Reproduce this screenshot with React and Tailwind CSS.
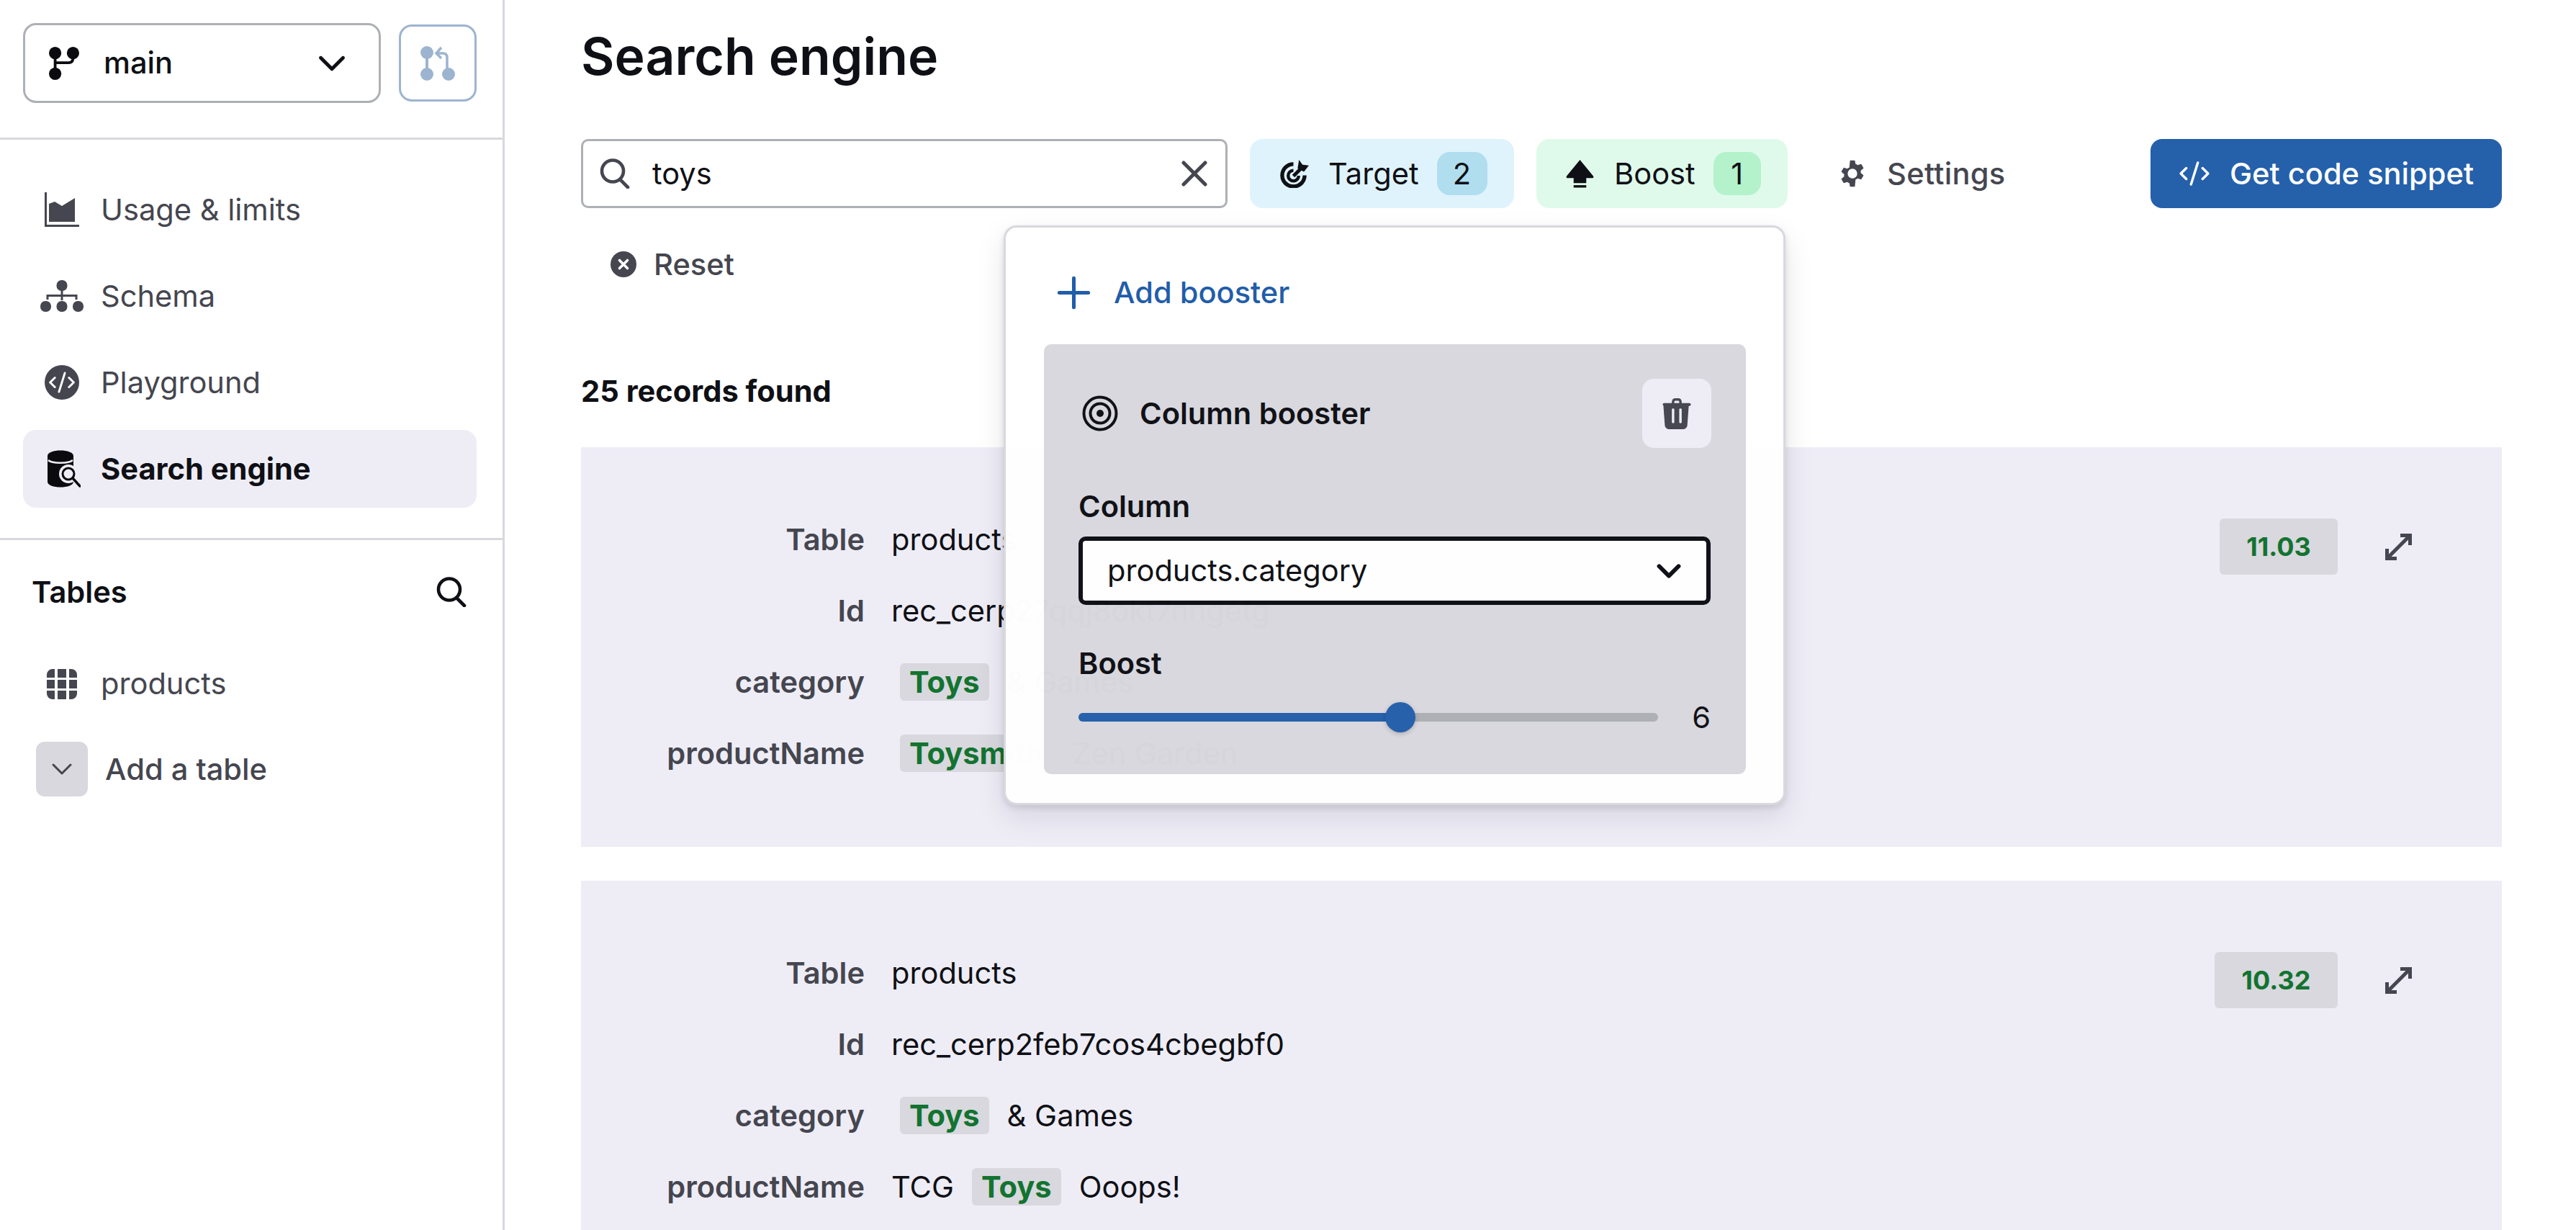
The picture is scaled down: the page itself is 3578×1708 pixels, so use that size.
import React from "react";
import { ChevronDown, X, Plus } from "lucide-react";

const font = { fontFamily: "Inter, sans-serif" };

const SearchGlyph = ({ className }) => (
  <svg viewBox="0 0 42 42" className={className} fill="none" stroke="currentColor" strokeWidth="4.6" strokeLinecap="round">
    <circle cx="18" cy="17.500" r="15" />
    <path d="M28 29l11 11" />
  </svg>
);

const BranchIcon = ({ className }) => (
  <svg viewBox="0 0 44 48" className={className} fill="currentColor">
    <circle cx="9" cy="9" r="9" />
    <circle cx="35" cy="9" r="9" />
    <circle cx="9" cy="39" r="9" />
    <path d="M7 9h4v12h18c3 0 4-2 4-5v-4h4v4c0 6-3 9-8 9H11v14H7z" />
  </svg>
);

const PullIcon = ({ className }) => (
  <svg viewBox="0 0 48 48" className={className} fill="currentColor">
    <circle cx="9" cy="9" r="9" />
    <circle cx="9" cy="39" r="9" />
    <circle cx="39" cy="39" r="9" />
    <path d="M7 9h4v30H7z" />
    <path d="M37 39V16c0-4-2-6-6-6h-7" fill="none" stroke="currentColor" strokeWidth="3.5" />
    <path d="M29 2l-7 8 7 7" fill="none" stroke="currentColor" strokeWidth="3.5" />
  </svg>
);

const UsageIcon = ({ className }) => (
  <svg viewBox="0 0 48 48" className={className} fill="currentColor">
    <path d="M0 0h3v45h45v3H0z" />
    <path d="M6 16l8-3 10 6 18-11v33H6z" />
  </svg>
);

const SchemaIcon = ({ className }) => (
  <svg viewBox="0 0 60 44" className={className} fill="currentColor">
    <rect x="22.5" y="0" width="15" height="15" rx="7" />
    <rect x="0" y="29" width="15" height="15" rx="7" />
    <rect x="22.5" y="29" width="15" height="15" rx="7" />
    <rect x="45" y="29" width="15" height="15" rx="7" />
    <path d="M28.5 14h3v6h20v7h-3v-4h-17v5h-3v-5h-17v4h-3v-7h20z" />
  </svg>
);

const CodeGlyph = ({ className }) => (
  <svg viewBox="0 0 44 36" className={className} fill="none" stroke="currentColor" strokeWidth="3.6" strokeLinecap="round" strokeLinejoin="round">
    <path d="M10 10l-8 8 8 8" />
    <path d="M34 10l8 8-8 8" />
    <path d="M27 2l-10 32" />
  </svg>
);

const PlaygroundIcon = ({ className }) => (
  <div className={`flex items-center justify-center rounded-full bg-[#45464f] text-white ${className}`}>
    <CodeGlyph className="w-[36px] h-[30px]" />
  </div>
);

const DbSearchIcon = ({ className }) => (
  <svg viewBox="0 0 46 52" className={className}>
    <path d="M0 8c0-10 36-10 36 0v36c0 10-36 10-36 0z" fill="#0b0b0f" />
    <path d="M1 14c5 5 29 5 34 0" fill="none" stroke="#eeedf6" strokeWidth="2.5" />
    <circle cx="29" cy="33" r="13" fill="#eeedf6" />
    <circle cx="29" cy="33" r="8" fill="none" stroke="#0b0b0f" strokeWidth="3" />
    <path d="M35 39l10 11" stroke="#0b0b0f" strokeWidth="3.5" strokeLinecap="round" />
  </svg>
);

const GridIcon = ({ className }) => (
  <svg viewBox="0 0 42 42" className={className} fill="currentColor">
    <path d="M0 8a8 8 0 0 1 8-8h3v12H0zM15 0h12v12H15zM31 0h3a8 8 0 0 1 8 8v4H31zM0 15h11v12H0zM15 15h12v12H15zM31 15h11v12H31zM0 30h11v12H8a8 8 0 0 1-8-8zM15 30h12v12H15zM31 30h11v4a8 8 0 0 1-8 8h-3z" />
  </svg>
);

const TargetArrowIcon = ({ className }) => (
  <svg viewBox="0 0 42 40" className={className} fill="none" stroke="currentColor">
    <path d="M20 6a16 16 0 1 0 16 16" strokeWidth="5.5" />
    <path d="M20 15a7.5 7.5 0 1 0 7.5 7.5" strokeWidth="4.5" />
    <path d="M20 23L31 12" strokeWidth="5" />
    <path d="M26 12l2-12 5 7 9 1-7 9z" fill="currentColor" stroke="none" />
  </svg>
);

const BoostIcon = ({ className }) => (
  <svg viewBox="0 0 40 40" className={className} fill="currentColor">
    <path d="M20 0l19 23c1 2 0 3-2 3h-8v7H11v-7H3c-2 0-3-1-2-3z" />
    <rect x="11" y="36" width="18" height="3.500" />
  </svg>
);

const GearIcon = ({ className }) => (
  <svg viewBox="0 0 24 24" className={className} fill="currentColor">
    <path fillRule="evenodd" d="M14 1l.6 3.1c.6.2 1.200.5 1.700.9l3-1 2 3.500-2.400 2.100c.1.600.1 1.200 0 1.800l2.400 2.100-2 3.500-3-1c-.5.400-1.100.7-1.700.9L14 23h-4l-.6-3.100c-.6-.2-1.200-.5-1.700-.9l-3 1-2-3.500 2.400-2.100c-.1-.6-.1-1.200 0-1.800L2.700 10.500l2-3.500 3 1c.5-.4 1.100-.7 1.700-.9L10 1zM12 8a4 4 0 1 0 0 8 4 4 0 0 0 0-8z" />
  </svg>
);

const ResetIcon = ({ className }) => (
  <svg viewBox="0 0 36 36" className={className}>
    <circle cx="18" cy="18" r="18" fill="#45464f" />
    <path d="M12.500 12.500l11 11M23.500 12.500l-11 11" stroke="#fff" strokeWidth="3.600" strokeLinecap="round" />
  </svg>
);

const RingsIcon = ({ className }) => (
  <svg viewBox="0 0 50 50" className={className} fill="none" stroke="currentColor">
    <circle cx="25" cy="25" r="22.500" strokeWidth="4" />
    <circle cx="25" cy="25" r="13.500" strokeWidth="4" />
    <circle cx="25" cy="25" r="5" fill="currentColor" stroke="none" />
  </svg>
);

const TrashIcon = ({ className }) => (
  <svg viewBox="0 0 40 44" className={className} fill="currentColor">
    <path fillRule="evenodd" d="M13 7V5c0-3 2-5 5-5h4c3 0 5 2 5 5v2h11c1 0 2 1 2 2s-1 2-2 2h-1l-2 27c0 3-3 6-6 6H9c-3 0-6-3-6-6L1 11H2C1 11 0 10 0 9s1-2 2-2zM16.500 7h7V5c0-1-1-1.500-2-1.500h-3c-1 0-2 .5-2 1.500zM13 16v18c0 2 3.500 2 3.500 0V16c0-2-3.500-2-3.500 0zM23.500 16v18c0 2 3.500 2 3.500 0V16c0-2-3.500-2-3.500 0z" />
  </svg>
);

const ExpandIcon = ({ className }) => (
  <svg viewBox="0 0 37 37" className={className} fill="none" stroke="currentColor" strokeWidth="5">
    <path d="M21 2.500h13.500V16" />
    <path d="M34 3L3 34" />
    <path d="M2.500 21v13.500H16" />
  </svg>
);

const navItems = [
  { label: "Usage & limits", icon: <UsageIcon className="w-[48px] h-[48px]" /> },
  { label: "Schema", icon: <SchemaIcon className="w-[60px] h-[44px]" /> },
  { label: "Playground", icon: <PlaygroundIcon className="w-[48px] h-[48px]" /> },
];

const Hit = ({ children }) => (
  <span className="rounded-[6px] bg-[#d8d8de] px-[13px] leading-[52px] font-bold text-[#137330] first:ml-[12px]">{children}</span>
);

const Row = ({ label, children }) => (
  <div className="flex h-[99px] items-center">
    <div className="w-[394px] text-right text-[#45464f] font-[580]">{label}</div>
    <div className="ml-[37px] flex items-center gap-[25px] whitespace-nowrap text-[#0f1015]">{children}</div>
  </div>
);

const Record = ({ score, scoreW, id, category, name }) => (
  <div className="flex h-[555px] shrink-0 justify-between bg-[#eeedf6] pt-[79px] pr-[125px]">
    <div>
      <Row label="Table">products</Row>
      <Row label="Id">{id}</Row>
      <Row label="category">{category}</Row>
      <Row label="productName">{name}</Row>
    </div>
    <div className="flex items-start gap-[66px] pt-[20px]">
      <div className={`flex h-[78px] items-center justify-center rounded-[6px] bg-[#d8d8de] font-bold text-[36px] text-[#137330] ${scoreW}`}>{score}</div>
      <ExpandIcon className="mt-[21px] size-[37px] text-[#45464f]" />
    </div>
  </div>
);

export default function App() {
  return (
    <div className="flex h-[1708px] w-[3578px] overflow-hidden bg-white text-[41.6px] text-[#0f1015]" style={font}>
      {/* Sidebar */}
      <aside className="h-full w-[701px] shrink-0 border-r-[3px] border-[#d8d8de]">
        <div className="flex h-[194px] items-start gap-[25px] border-b-[3px] border-[#d8d8de] pt-[32px] pl-[32px]">
          <div className="flex h-[111px] w-[497px] items-center rounded-[18px] border-[3px] border-[#adb0b5] pl-[33px] pr-[34px]">
            <BranchIcon className="w-[42px] h-[48px] text-[#0b0b0f]" />
            <span className="ml-[34px] flex-1 font-medium">main</span>
            <ChevronDown className="size-[62px]" strokeWidth={1.9} />
          </div>
          <div className="mt-[2px] flex h-[107px] w-[108px] items-center justify-center rounded-[18px] border-[3px] border-[#9db4d0]">
            <PullIcon className="size-[48px] text-[#9db4d0]" />
          </div>
        </div>

        <nav className="flex h-[556px] flex-col gap-[12px] border-b-[3px] border-[#d8d8de] pl-[32px] pr-[36px] pt-[43px]">
          {navItems.map((item) => (
            <div key={item.label} className="flex h-[108px] items-center text-[#45464f]">
              <div className="flex w-[108px] justify-center">{item.icon}</div>
              <span>{item.label}</span>
            </div>
          ))}
          <div className="flex h-[108px] items-center rounded-[18px] bg-[#eeedf6] font-[650]">
            <div className="flex w-[108px] justify-center pl-[6px]">
              <DbSearchIcon className="w-[46px] h-[52px]" />
            </div>
            <span>Search engine</span>
          </div>
        </nav>

        <div className="flex items-center justify-between pt-[41px] pl-[44px] pr-[50px]">
          <span className="font-semibold">Tables</span>
          <SearchGlyph className="size-[42px]" />
        </div>
        <div className="mt-[65px] flex items-center pl-[65px] text-[#45464f]">
          <GridIcon className="size-[42px]" />
          <span className="ml-[33px]">products</span>
        </div>
        <div className="mt-[49px] flex items-center pl-[50px] text-[#45464f] font-medium">
          <div className="flex h-[76px] w-[72px] items-center justify-center rounded-[12px] bg-[#d8d8de]">
            <ChevronDown className="size-[48px]" strokeWidth={1.5} />
          </div>
          <span className="ml-[24px]">Add a table</span>
        </div>
      </aside>

      {/* Main */}
      <main className="relative flex flex-1 flex-col pl-[106px] pr-[103px]">
        <h1 className="mt-[34px] text-[71.5px] leading-[88px] font-semibold">Search engine</h1>

        <div className="mt-[71px] flex h-[96px] items-center">
          <div className="flex h-[96px] w-[898px] items-center rounded-[10px] border-[3px] border-[#adb0b5] pl-[23px] pr-[13px]">
            <SearchGlyph className="size-[42px] text-[#45464f]" />
            <span className="ml-[31px] flex-1">toys</span>
            <X className="size-[60px] text-[#45464f]" strokeWidth={2} />
          </div>
          <div className="ml-[31px] flex h-[96px] w-[367px] items-center rounded-[18px] bg-[#dff3fc] pl-[41px]">
            <TargetArrowIcon className="w-[41px] h-[39px]" />
            <span className="ml-[27px]">Target</span>
            <span className="ml-[25px] flex h-[60px] w-[70px] items-center justify-center rounded-[18px] bg-[#b0deef]">2</span>
          </div>
          <div className="ml-[31px] flex h-[96px] w-[349px] items-center rounded-[18px] bg-[#dffaeb] pl-[41px]">
            <BoostIcon className="w-[39px] h-[39px]" />
            <span className="ml-[28px]">Boost</span>
            <span className="ml-[25px] flex h-[60px] w-[66px] items-center justify-center rounded-[18px] bg-[#b3f2cb]">1</span>
          </div>
          <div className="ml-[70px] flex items-center text-[#45464f] font-medium">
            <GearIcon className="size-[40px]" />
            <span className="ml-[28px] tracking-[0.3px]">Settings</span>
          </div>
          <div className="ml-auto flex h-[96px] w-[488px] items-center rounded-[16px] bg-[#2560ab] pl-[40px] text-white font-medium">
            <CodeGlyph className="w-[42px] h-[34px]" />
            <span className="ml-[28px]">Get code snippet</span>
          </div>
        </div>

        <div className="mt-[47px] flex items-center pl-[41px] text-[#45464f] font-medium">
          <ResetIcon className="size-[36px]" />
          <span className="ml-[24px]">Reset</span>
        </div>

        <div className="mt-[114px] font-[650]">25 records found</div>

        <div className="mt-[46px] flex flex-col gap-[47px]">
          <Record
            score="11.03"
            scoreW="w-[164px]"
            id="rec_cerp27qqj8okt7nngetg"
            category={<><Hit>Toys</Hit><span>&amp; Games</span></>}
            name={<><Hit>Toysmith</Hit><span>Zen Garden</span></>}
          />
          <Record
            score="10.32"
            scoreW="w-[171px]"
            id="rec_cerp2feb7cos4cbegbf0"
            category={<><Hit>Toys</Hit><span>&amp; Games</span></>}
            name={<><span>TCG</span><Hit>Toys</Hit><span>Ooops!</span></>}
          />
        </div>

        {/* Boost popover, over the records */}
        <div className="absolute top-[313px] left-[693px] h-[805px] w-[1086px] rounded-[18px] border-[3px] border-[#d8d8de] bg-white pt-[56px] pl-[53px] pr-[52px] opacity-[0.99] shadow-[0_4px_8px_rgba(20,20,40,0.12),0_16px_40px_rgba(20,20,40,0.1)]">
          <div className="ml-[7px] flex items-center text-[#1f5ca8] font-medium">
            <Plus className="size-[69px]" strokeWidth={1.75} />
            <span className="ml-[21px]">Add booster</span>
          </div>
          <div className="mt-[37px] h-[597px] rounded-[10px] bg-[#d8d8de] px-[48px] pt-[48px]">
            <div className="flex items-center justify-between">
              <div className="flex items-center font-semibold">
                <RingsIcon className="ml-[5px] h-[50px] w-[50px]" />
                <span className="ml-[30px]">Column booster</span>
              </div>
              <div className="flex h-[96px] w-[96px] items-center justify-center rounded-[16px] bg-[#eeedf6]">
                <TrashIcon className="h-[43px] w-[40px] text-[#45464f]" />
              </div>
            </div>
            <div className="mt-[54px] leading-[54px] font-[570]">Column</div>
            <div className="mt-[15px] flex h-[95px] w-[878px] items-center justify-between rounded-[10px] border-[6px] border-[#0f1015] bg-white pl-[34px] pr-[25px]">
              <span>products.category</span>
              <ChevronDown className="size-[54px]" strokeWidth={2.6} />
            </div>
            <div className="mt-[54px] leading-[54px] font-[570]">Boost</div>
            <div className="mt-[17px] flex w-[878px] items-center justify-between">
              <div className="relative flex h-[12px] w-[805px] items-center rounded-full bg-[#adb0b5]">
                <div className="h-[12px] w-[446px] rounded-full bg-[#2560ab]" />
                <div className="absolute left-[426px] size-[42px] rounded-full bg-[#2560ab] shadow-[0_2px_6px_rgba(0,0,0,0.2)]" />
              </div>
              <span>6</span>
            </div>
          </div>
        </div>
      </main>
    </div>
  );
}
